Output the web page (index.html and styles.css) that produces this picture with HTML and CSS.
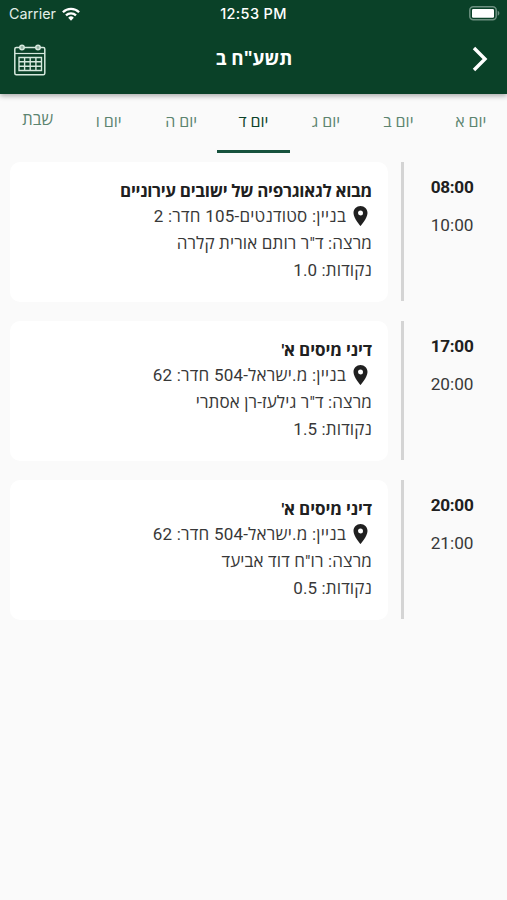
FILE: index.html
```html
<!DOCTYPE html>
<html lang="he" dir="rtl">
<head>
<meta charset="utf-8">
<meta name="viewport" content="width=device-width">
<title>תשע"ח ב</title>
<link rel="stylesheet" href="styles.css">
</head>
<body>
<svg width="0" height="0" class="defs" aria-hidden="true">
  <symbol id="pin" viewBox="0 0 14 20"><path fill-rule="evenodd" d="M7 0C3.100 0 0 3.100 0 7c0 5.200 7 13 7 13s7-7.800 7-13c0-3.900-3.100-7-7-7zm0 4.500a2.500 2.500 0 1 1 0 5 2.500 2.500 0 0 1 0-5z"/></symbol>
</svg>
<header class="app-header">
  <div class="status" dir="ltr">
    <div class="carrier"><span>Carrier</span>
      <svg class="wifi" viewBox="0 0 18 14"><g fill="none" stroke="#fff" stroke-width="2.300"><path d="M.9 5.200a11.500 11.500 0 0 1 16.200 0"/><path d="M4 8.400a7.100 7.100 0 0 1 10 0"/></g><path fill="#fff" d="M6.200 10.700a4 4 0 0 1 5.600 0L9 13.700z"/></svg>
    </div>
    <div class="clock">12:53 PM</div>
    <svg class="battery" viewBox="0 0 31 15"><rect x=".8" y=".8" width="26.400" height="13" rx="3.500" fill="none" stroke="#6c9080" stroke-width="1.500"/><rect x="3" y="3" width="22" height="8.800" rx="1.200" fill="#fff"/><path d="M28.700 4.800c2.200.7 2.200 4.300 0 5z" fill="#6c9080"/></svg>
  </div>
  <nav class="navbar" dir="ltr">
    <svg class="calendar" viewBox="0 0 32 32" fill="none" stroke="#d6e8dd"><rect x=".8" y="3.500" width="30" height="27.300" rx="1.500" stroke-width="1.500"/><path d="M1 9.500h30" stroke-width="1.200"/><g fill="#8fae9f" stroke-width="1.500"><circle cx="8" cy="3.500" r="2.200"/><circle cx="24" cy="3.500" r="2.200"/></g><path stroke-width="1.400" d="M5 13.500h22.500v13H5zM5 17.800h22.500M5 22.200h22.500M10.600 13.500v13M16.200 13.500v13M21.900 13.500v13"/></svg>
    <h1 dir="rtl">תשע"ח ב</h1>
    <svg class="chevron" viewBox="0 0 16 26"><path d="M2 2l11 11L2 24" fill="none" stroke="#fff" stroke-width="3.400"/></svg>
  </nav>
</header>
<div class="tabs">
  <div class="tab">יום א</div><div class="tab">יום ב</div><div class="tab">יום ג</div><div class="tab active">יום ד</div><div class="tab">יום ה</div><div class="tab">יום ו</div><div class="tab saturday">שבת</div>
</div>
<main>
  <section class="lesson">
    <div class="times"><b>08:00</b><span>10:00</span></div>
    <div class="card">
      <h2 class="long">מבוא לגאוגרפיה של ישובים עירוניים</h2>
      <p class="place"><svg class="pin"><use href="#pin"/></svg><span>בניין: סטודנטים-105 חדר: 2</span></p>
      <p>מרצה: ד"ר רותם אורית קלרה</p>
      <p>נקודות: 1.0</p>
    </div>
  </section>
  <section class="lesson">
    <div class="times"><b>17:00</b><span>20:00</span></div>
    <div class="card">
      <h2>דיני מיסים א'</h2>
      <p class="place"><svg class="pin"><use href="#pin"/></svg><span>בניין: מ.ישראל-504 חדר: 62</span></p>
      <p>מרצה: ד"ר גילעז-רן אסתרי</p>
      <p>נקודות: 1.5</p>
    </div>
  </section>
  <section class="lesson">
    <div class="times"><b>20:00</b><span>21:00</span></div>
    <div class="card">
      <h2>דיני מיסים א'</h2>
      <p class="place"><svg class="pin"><use href="#pin"/></svg><span>בניין: מ.ישראל-504 חדר: 62</span></p>
      <p>מרצה: רו"ח דוד אביעד</p>
      <p>נקודות: 0.5</p>
    </div>
  </section>
</main>
</body>
</html>
```
FILE: styles.css
```css
* { box-sizing: border-box; }
body { margin: 0; min-height: 900px; background: #fafafa; color: #383838; font-family: Roboto, "Open Sans", "Noto Sans", sans-serif; }
h1, h2, p { margin: 0; }
.defs { display: block; }
.app-header { height: 94px; background: #0a4128; color: #fff; box-shadow: 0 2px 5px rgba(0,0,0,.32); }
.status { height: 27px; display: grid; grid-template-columns: 1fr auto 1fr; align-items: center; padding: 0 7px 0 9px; font: 500 14.500px/27px Inter, sans-serif; }
.carrier { display: flex; align-items: center; gap: 6px; font-weight: 400; color: #e3eee8; font-size: 14.300px; }
.wifi { width: 18px; height: 14px; }
.clock { font-weight: 500; letter-spacing: .35px; margin-right: 2px; }
.battery { width: 31px; height: 15px; justify-self: end; }
.navbar { height: 66px; padding: 0 19px 0 14px; display: grid; grid-template-columns: 1fr auto 1fr; align-items: center; }
.calendar { width: 32px; height: 32px; }
.navbar h1 { font: 700 18.800px/24px "Open Sans", sans-serif; margin: 0 -6px 4px 0; }
.chevron { width: 16px; height: 26px; justify-self: end; margin-bottom: 2px; }
.tabs { height: 59px; display: grid; grid-template-columns: repeat(7, 1fr); }
.tab { border-bottom: 3px solid transparent; text-align: center; font-size: 16px; line-height: 55px; height: 59px; color: #5c8470; }
.tab.active { color: #0a4128; border-color: #17523d; }
.tab.saturday { line-height: 52px; font-size: 16.500px; padding-left: 3px; }
main { padding: 9px 10px 0; display: flex; flex-direction: column; gap: 20px; }
.lesson { height: 139px; display: flex; }
.times { width: 96px; border-left: 3px solid #d4d4d4; display: flex; flex-direction: column; padding: 12px 23.500px 0 0; font-size: 17.200px; line-height: 26px; gap: 12px; }
.times b { font-weight: 700; color: #202020; letter-spacing: -.3px; }
.card { width: 378px; margin-right: 13px; height: 140px; background: #fff; border-radius: 10px; padding: 16px 16px 0 0; font-size: 17px; line-height: 27px; white-space: nowrap; letter-spacing: .13px; }
.card h2 { font-size: 17px; line-height: 27px; margin-bottom: -2px; color: #202020; letter-spacing: -.1px; }
.card h2.long { letter-spacing: -.29px; }
.place { display: flex; align-items: center; gap: 7px; letter-spacing: .22px; }
.pin { width: 15px; height: 20px; margin: -1px 4px 0 0; fill: #202020; }
```
